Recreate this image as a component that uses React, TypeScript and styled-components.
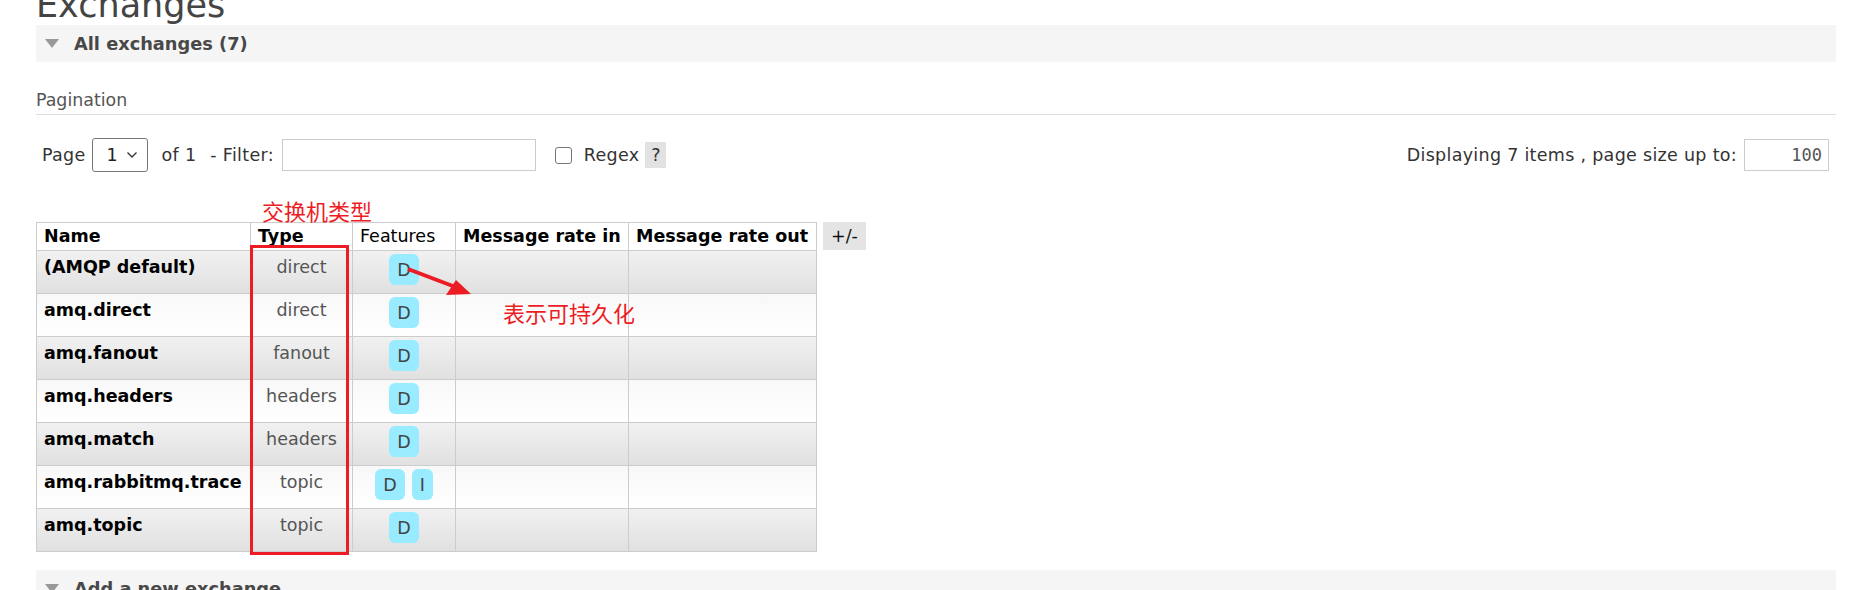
import React from 'react';
import styled, { createGlobalStyle } from 'styled-components';

const FONT = "'DejaVu Sans', Verdana, sans-serif";
const CJK = "'Noto Sans CJK SC', 'DejaVu Sans', sans-serif";
const RED = '#ed1c24';

interface Exchange {
  name: string;
  type: string;
  features: string[];
}

const exchanges: Exchange[] = [
  { name: '(AMQP default)', type: 'direct', features: ['D'] },
  { name: 'amq.direct', type: 'direct', features: ['D'] },
  { name: 'amq.fanout', type: 'fanout', features: ['D'] },
  { name: 'amq.headers', type: 'headers', features: ['D'] },
  { name: 'amq.match', type: 'headers', features: ['D'] },
  { name: 'amq.rabbitmq.trace', type: 'topic', features: ['D', 'I'] },
  { name: 'amq.topic', type: 'topic', features: ['D'] },
];

const GlobalStyle = createGlobalStyle`
  html, body {
    margin: 0;
    padding: 0;
    background: #fff;
    overflow: hidden;
  }
  body {
    font-family: ${FONT};
    font-size: 17.5px;
    color: #484848;
  }
`;

const App: React.FC = () => (
  <>
    <GlobalStyle />
    <Page>
      <Title>Exchanges</Title>
      <SectionBar>
        <Triangle />
        <SectionTitle>All exchanges (7)</SectionTitle>
      </SectionBar>

      <PaginationLabel>Pagination</PaginationLabel>
      <Controls>
        <ControlGroup>
          <Label>Page</Label>
          <SelectBox>
            <span>1</span>
            <svg width="12" height="8" viewBox="0 0 12 8">
              <path d="M1.5 1.5 L6 6 L10.5 1.5" fill="none" stroke="#333" strokeWidth="1.4" />
            </svg>
          </SelectBox>
          <Label $ml={14}>of 1</Label>
          <Label $ml={14}>- Filter:</Label>
          <FilterInput />
          <Checkbox />
          <Label $ml={12}>Regex</Label>
          <HelpBox>?</HelpBox>
        </ControlGroup>
        <ControlGroup>
          <Label>Displaying 7 items , page size up to:</Label>
          <PageSizeInput>100</PageSizeInput>
        </ControlGroup>
      </Controls>

      <TableArea>
        <Table>
          <thead>
            <tr>
              <Th $w={214} $bold>Name</Th>
              <Th $w={102} $bold>Type</Th>
              <Th $w={103}>Features</Th>
              <Th $w={173} $bold>Message rate in</Th>
              <Th $w={188} $bold>Message rate out</Th>
            </tr>
          </thead>
          <tbody>
            {exchanges.map((ex, i) => (
              <Row key={ex.name} $alt={i % 2 === 0}>
                <NameCell>{ex.name}</NameCell>
                <TypeCell>{ex.type}</TypeCell>
                <FeatureCell>
                  <Badges>
                    {ex.features.map((f) => (
                      <Badge key={f}>{f}</Badge>
                    ))}
                  </Badges>
                </FeatureCell>
                <Td />
                <Td />
              </Row>
            ))}
          </tbody>
        </Table>
        <ToggleButton>+/-</ToggleButton>

        <Note $left={226} $top={-23}>交换机类型</Note>
        <Note $left={467} $top={79}>表示可持久化</Note>
        <RedBox />
        <Arrow width="80" height="40" viewBox="0 0 80 40">
          <line x1="2" y1="4" x2="52" y2="23" stroke={RED} strokeWidth="4" />
          <polygon points="65,29 40,30 50,15" fill={RED} />
        </Arrow>
      </TableArea>

      <SectionBar $mt={18}>
        <Triangle />
        <SectionTitle>Add a new exchange</SectionTitle>
      </SectionBar>
    </Page>
  </>
);

const Page = styled.div`
  padding: 0 28px 0 36px;
  width: 1800px;
`;

const Title = styled.h1`
  margin: -15px 0 0;
  font-size: 35px;
  line-height: 40px;
  font-weight: normal;
  color: #444;
`;

const SectionBar = styled.div<{ $mt?: number }>`
  display: flex;
  align-items: center;
  height: 37px;
  margin-top: ${(p) => p.$mt ?? 0}px;
  background: #f5f5f5;
  padding-left: 9px;
`;

const Triangle = styled.span`
  width: 0;
  height: 0;
  border-left: 7px solid transparent;
  border-right: 7px solid transparent;
  border-top: 9px solid #999;
  margin-right: 15px;
`;

const SectionTitle = styled.h2`
  margin: 0;
  font-size: 17.8px;
  font-weight: bold;
  color: #484848;
`;

const PaginationLabel = styled.h3`
  margin: 28px 0 0;
  font-size: 17.4px;
  line-height: 20px;
  font-weight: normal;
  color: #555;
  padding-bottom: 4px;
  border-bottom: 1px solid #ddd;
`;

const Controls = styled.div`
  display: flex;
  justify-content: space-between;
  align-items: center;
  height: 34px;
  margin-top: 23px;
  padding: 0 7px 0 6px;
`;

const ControlGroup = styled.div`
  display: flex;
  align-items: center;
`;

const Label = styled.span<{ $ml?: number }>`
  margin-left: ${(p) => p.$ml ?? 0}px;
  color: #333;
  letter-spacing: 0.3px;
  white-space: nowrap;
`;

const SelectBox = styled.div`
  display: flex;
  align-items: center;
  justify-content: space-between;
  box-sizing: border-box;
  width: 56px;
  height: 34px;
  margin-left: 6px;
  padding: 0 9px 0 14px;
  border: 1px solid #767676;
  border-radius: 3px;
  color: #222;
`;

const FilterInput = styled.div`
  box-sizing: border-box;
  width: 254px;
  height: 32px;
  margin-left: 8px;
  border: 1px solid #ccc;
  background: #fff;
`;

const Checkbox = styled.span`
  box-sizing: border-box;
  width: 17px;
  height: 17px;
  margin-left: 19px;
  border: 1px solid #767676;
  border-radius: 3px;
  background: #fff;
`;

const HelpBox = styled.span`
  display: flex;
  align-items: center;
  justify-content: center;
  width: 21px;
  height: 26px;
  margin-left: 6px;
  background: #e2e2e2;
  color: #333;
`;

const PageSizeInput = styled.div`
  box-sizing: border-box;
  width: 85px;
  height: 32px;
  margin-left: 7px;
  padding-right: 6px;
  border: 1px solid #ccc;
  font-family: 'DejaVu Sans Mono', monospace;
  font-size: 17px;
  line-height: 30px;
  text-align: right;
  color: #555;
`;

const TableArea = styled.div`
  position: relative;
  display: flex;
  align-items: flex-start;
  gap: 6px;
  margin-top: 50px;
`;

const Table = styled.table`
  border-collapse: collapse;
  table-layout: fixed;
  width: 781px;
  border: 1px solid #ccc;
`;

const Th = styled.th<{ $w: number; $bold?: boolean }>`
  width: ${(p) => p.$w}px;
  box-sizing: border-box;
  padding: 3px 7px 4px;
  text-align: left;
  font-weight: ${(p) => (p.$bold ? 'bold' : 'normal')};
  color: #000;
  background: #fff;
  border: 1px solid #ccc;
  white-space: nowrap;
`;

const Row = styled.tr<{ $alt: boolean }>`
  background: ${(p) =>
    p.$alt
      ? 'linear-gradient(#f1f1f1, #e0e0e0)'
      : 'linear-gradient(#f8f8f8, #fff)'};
`;

const Td = styled.td`
  height: 42px;
  box-sizing: border-box;
  padding: 6px 7px;
  vertical-align: top;
  border: 1px solid #ccc;
  white-space: nowrap;
`;

const NameCell = styled(Td)`
  font-weight: bold;
  color: #000;
`;

const TypeCell = styled(Td)`
  text-align: center;
  color: #555;
`;

const FeatureCell = styled(Td)`
  padding: 3px 4px 8px;
`;

const Badges = styled.div`
  display: flex;
  justify-content: center;
  gap: 7px;
`;

const Badge = styled.span`
  display: flex;
  align-items: center;
  height: 31px;
  padding: 0 8px;
  border-radius: 6px;
  background: #99ebff;
  color: #444;
`;

const ToggleButton = styled.div`
  display: flex;
  align-items: center;
  justify-content: center;
  width: 43px;
  height: 28px;
  background: #e4e4e4;
  color: #111;
`;

const Note = styled.span<{ $left: number; $top: number }>`
  position: absolute;
  left: ${(p) => p.$left}px;
  top: ${(p) => p.$top}px;
  font-family: ${CJK};
  font-size: 22px;
  line-height: 22px;
  color: ${RED};
  white-space: nowrap;
`;

const RedBox = styled.div`
  position: absolute;
  left: 214px;
  top: 23px;
  width: 99px;
  height: 310px;
  box-sizing: border-box;
  border: 3px solid ${RED};
`;

const Arrow = styled.svg`
  position: absolute;
  left: 370px;
  top: 43px;
`;

export default App;
